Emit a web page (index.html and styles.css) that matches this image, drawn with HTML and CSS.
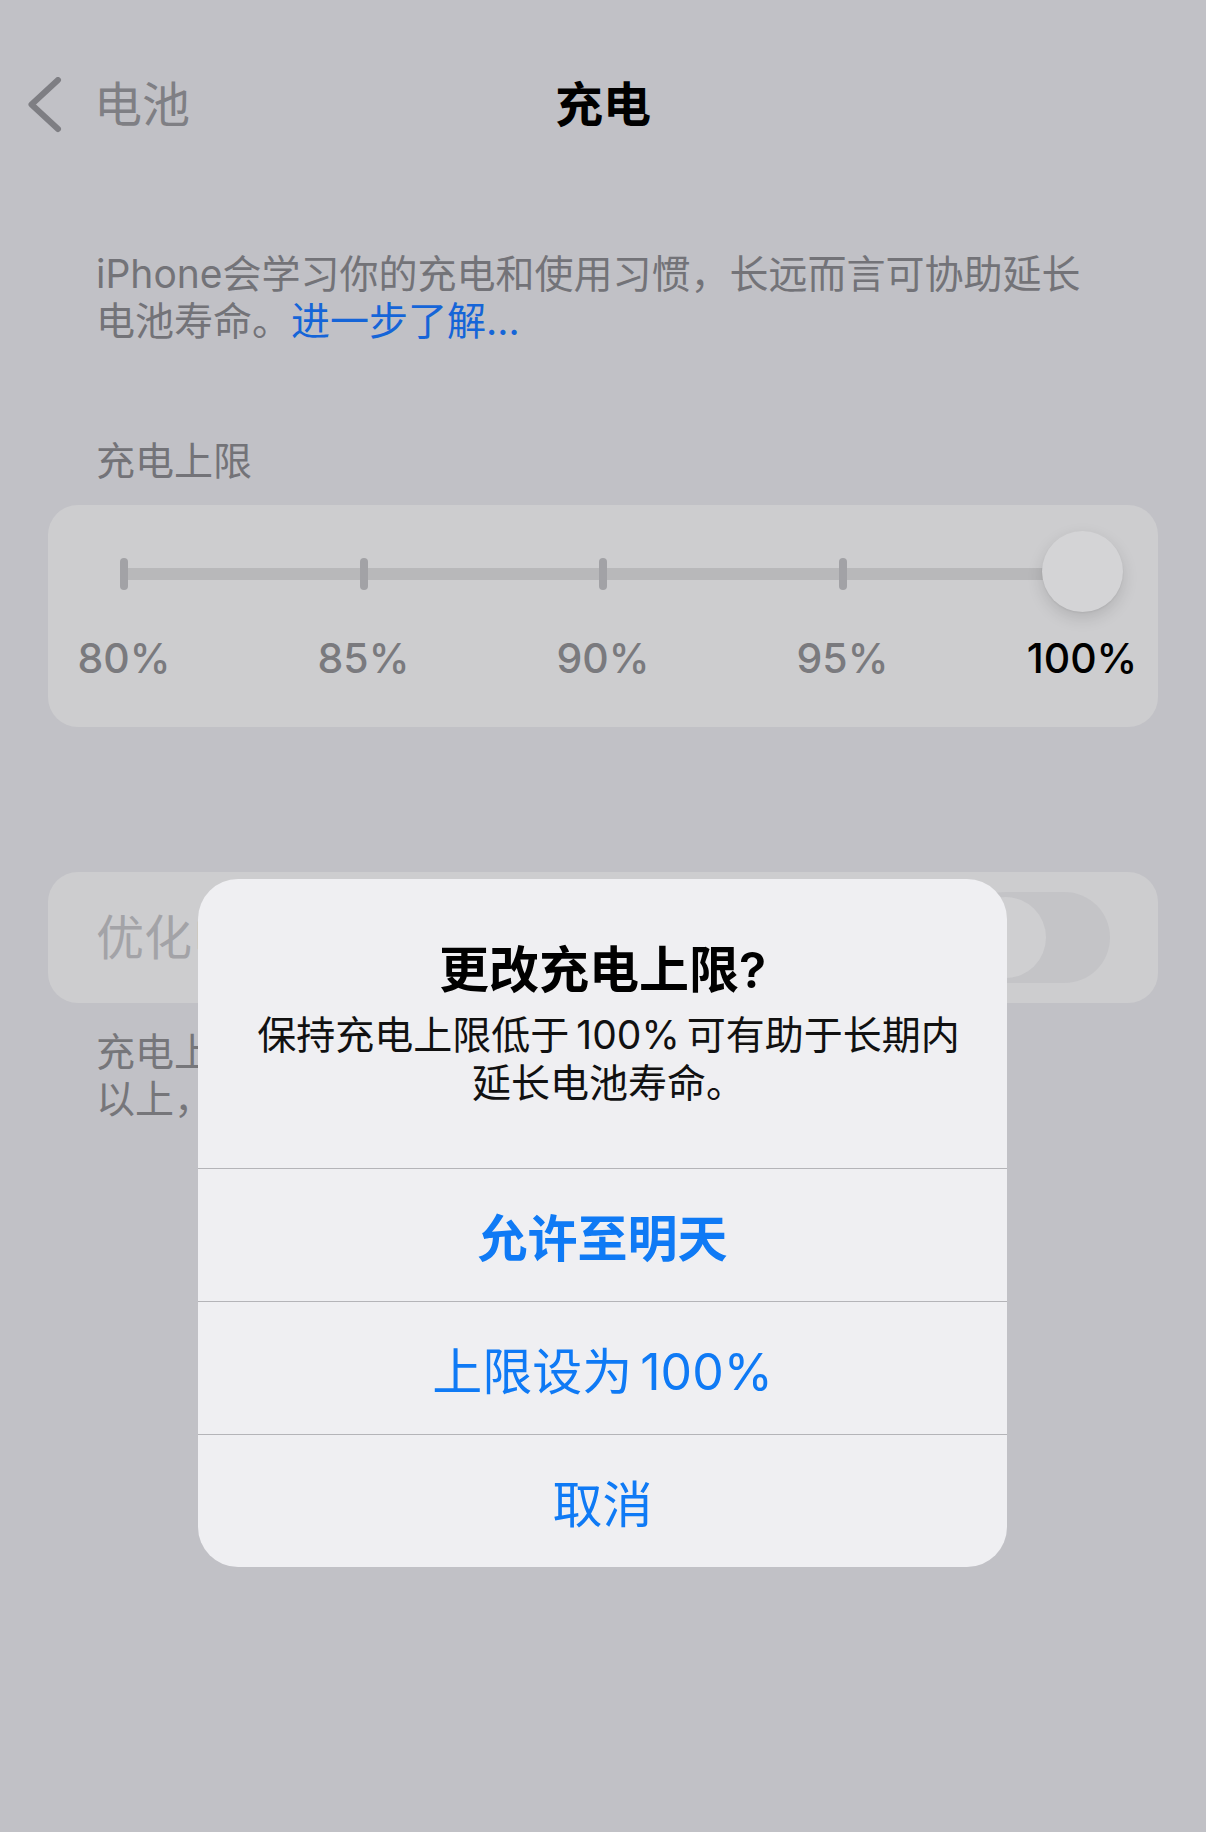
FILE: index.html
```html
<!DOCTYPE html>
<html lang="zh-CN">
<head>
  <meta charset="UTF-8">
  <meta name="viewport" content="width=device-width, initial-scale=1">
  <title>充电</title>
  <link rel="stylesheet" href="styles.css">
</head>
<body>

  <div class="screen">
    <header class="nav">
      <div class="nav-back">
        <svg class="chevron" width="34" height="56" viewBox="0 0 34 56">
          <polyline points="30,3 3.5,27.5 30,52" fill="none" stroke="#7e7e83" stroke-width="6" stroke-linecap="round" stroke-linejoin="round"/>
        </svg>
        <span>电池</span>
      </div>
      <h1 class="nav-title">充电</h1>
      <div></div>
    </header>

    <p class="note">iPhone会学习你的充电和使用习惯，长远而言可协助延长<br>电池寿命。<a class="link">进一步了解…</a></p>

    <div class="section-title">充电上限</div>

    <div class="card slider-card">
      <div class="slider">
        <div class="stop"><span class="tick"></span></div>
        <div class="stop"><span class="tick"></span></div>
        <div class="stop"><span class="tick"></span></div>
        <div class="stop"><span class="tick"></span></div>
        <div class="stop"><span class="thumb"></span></div>
      </div>
      <div class="slider-labels">
        <span>80%</span>
        <span>85%</span>
        <span>90%</span>
        <span>95%</span>
        <span class="current">100%</span>
      </div>
    </div>

    <div class="card toggle-row">
      <span class="toggle-label">优化电池充电</span>
      <span class="switch"><span class="knob"></span></span>
    </div>

    <p class="note footer">充电上限设为100%时，iPhone会延迟电量充到 80%<br>以上，直到你需要使用iPhone时。</p>
  </div>

  <div class="alert">
    <div class="alert-head">
      <h2>更改充电上限?</h2>
      <p>保持充电上限低于 100% 可有助于长期内<br>延长电池寿命。</p>
    </div>
    <button class="alert-btn primary">允许至明天</button>
    <button class="alert-btn">上限设为 100%</button>
    <button class="alert-btn">取消</button>
  </div>

</body>
</html>
```

FILE: styles.css
```css
body {
  margin: 0;
  padding: 0;
  background: #c1c1c6;
  font-family: Inter, "Noto Sans CJK SC", sans-serif;
  color: #000;
  width: 1206px;
  height: 1832px;
  overflow: hidden;
}

.screen {
  display: flex;
  flex-direction: column;
}

/* nav bar */
.nav {
  margin-top: 70px;
  height: 70px;
  display: grid;
  grid-template-columns: 1fr auto 1fr;
  align-items: center;
}

.nav-back {
  display: flex;
  align-items: center;
  gap: 32px;
  padding-left: 28px;
  font-size: 48px;
  line-height: 60px;
  color: #7f7f84;
}

.chevron {
  display: block;
}

.nav-title {
  margin: 0;
  font-size: 48px;
  line-height: 60px;
  font-weight: 700;
}

/* text blocks */
.note {
  margin: 110px 0 0;
  padding: 0 96px;
  font-size: 39px;
  line-height: 47px;
  color: #737378;
}

.link {
  color: #1565d8;
}

.section-title {
  margin-top: 93px;
  padding: 0 96px;
  font-size: 39px;
  line-height: 47px;
  color: #737378;
}

.card {
  margin: 0 48px;
  background: #cdcdcf;
  border-radius: 30px;
}

/* slider */
.slider-card {
  margin-top: 21px;
  padding: 26px 16px 44px;
}

.slider {
  height: 81px;
  display: flex;
  justify-content: space-between;
  align-items: center;
  background: linear-gradient(#b8b8ba, #b8b8ba) no-repeat 60px 37px / calc(100% - 120px) 12px;
}

.stop {
  width: 120px;
  display: flex;
  justify-content: center;
}

.tick {
  width: 8px;
  height: 32px;
  margin-top: 5px;
  border-radius: 4px;
  background: #a2a2a6;
}

.thumb {
  width: 81px;
  height: 81px;
  border-radius: 50%;
  background: #d4d4d6;
  box-shadow: 0 6px 16px rgba(0, 0, 0, 0.13), 0 1px 2px rgba(0, 0, 0, 0.06);
}

.slider-labels {
  margin-top: 21px;
  display: flex;
  justify-content: space-between;
  font-size: 41px;
  line-height: 50px;
  font-weight: 500;
  color: #7a7a7e;
}

.slider-labels span {
  width: 120px;
  text-align: center;
}

.slider-labels .current {
  color: #000;
}

/* toggle row */
.toggle-row {
  margin-top: 145px;
  height: 131px;
  padding: 0 48px;
  display: flex;
  align-items: center;
  justify-content: space-between;
}

.toggle-label {
  font-size: 48px;
  line-height: 60px;
  color: #a3a3a7;
}

.switch {
  width: 150px;
  height: 91px;
  border-radius: 46px;
  background: #c4c4c7;
  display: flex;
  align-items: center;
  padding: 0 5px;
  box-sizing: border-box;
}

.knob {
  width: 81px;
  height: 81px;
  border-radius: 50%;
  background: #cfcfd1;
}

.footer {
  margin-top: 25px;
  color: #76767a;
}

/* alert */
.alert {
  position: absolute;
  top: 879px;
  left: 198px;
  width: 809px;
  background: #efeff2;
  border-radius: 40px;
  overflow: hidden;
}

.alert-head {
  padding: 61px 40px;
  text-align: center;
}

.alert-head h2 {
  margin: 0;
  font-size: 50px;
  line-height: 60px;
  font-weight: 600;
}

.alert-head p {
  margin: 11px 0 0;
  padding-left: 12px;
  font-size: 39px;
  line-height: 48px;
  word-spacing: -4px;
  color: #111;
}

.alert-btn {
  display: flex;
  align-items: center;
  justify-content: center;
  width: 100%;
  height: 133px;
  box-sizing: border-box;
  margin: 0;
  padding: 0;
  border: none;
  border-top: 1px solid #b4b4b8;
  background: none;
  font-family: inherit;
  font-size: 50px;
  word-spacing: -6px;
  color: #0f7af5;
}

.alert-btn.primary {
  font-weight: 600;
}
```
